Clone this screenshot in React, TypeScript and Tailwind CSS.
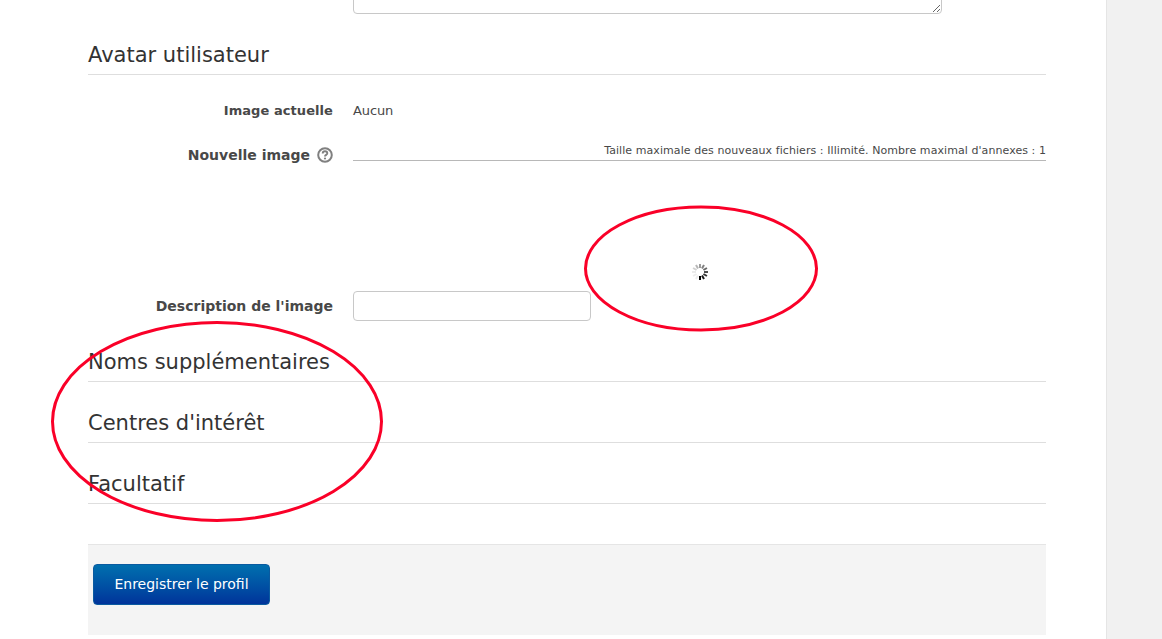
export default function App() {
  const font = { fontFamily: '"DejaVu Sans", sans-serif' };
  const Heading = ({ children, cls }: { children: string; cls: string }) => (
    <h3 className={`border-b border-[#dedede] text-[21px] leading-[24px] text-[#333333] pt-[1px] pb-[7px] ${cls}`}>{children}</h3>
  );
  return (
    <div style={font} className="relative flex h-[639px] w-[1162px] overflow-hidden bg-white">
      <div className="h-full w-[1107px] shrink-0 border-r border-[#e5e5e5] pl-[88px] pr-[60px]">
        <div className="flex">
          <div className="w-[265px] shrink-0" />
          <textarea className="mt-[-60px] block h-[74px] w-[589px] rounded-[4px] border border-[#c8c8c8] bg-white" />
        </div>
        <Heading cls="mt-[28px]">Avatar utilisateur</Heading>
        <div className="mt-[26px] flex items-center text-[13px] leading-[20px] text-[#484848]">
          <div className="w-[245px] text-right font-bold tracking-[0.07px]">Image actuelle</div>
          <div className="ml-[20px] tracking-[-0.1px]">Aucun</div>
        </div>
        <div className="mt-[24px] flex text-[#484848]">
          <div className="flex w-[245px] items-center justify-end gap-[7px] text-[14px] font-bold leading-[20px]">
            Nouvelle image
            <svg width="16" height="16" viewBox="0 0 16 16">
              <circle cx="8" cy="8" r="6.8" fill="none" stroke="#808080" strokeWidth="2" />
              <path d="M5.7 6.4c0-1.4 1.1-2.2 2.3-2.2s2.3.8 2.3 2c0 1.7-2.3 1.6-2.3 3.2" fill="none" stroke="#808080" strokeWidth="1.9" />
              <circle cx="8" cy="11.5" r="1.1" fill="#808080" />
            </svg>
          </div>
          <div className="ml-[20px] mt-[-4px] h-[20px] w-[693px] border-b border-[#b8b8b8] text-right text-[11px] leading-[20px] tracking-[0.07px] text-[#484848]">
            Taille maximale des nouveaux fichiers : Illimité. Nombre maximal d'annexes : 1
          </div>
        </div>
        <div className="mt-[126px] flex items-center text-[14px] text-[#484848]">
          <div className="w-[245px] text-right font-bold leading-[20px]">Description de l'image</div>
          <input className="ml-[20px] h-[30px] w-[238px] rounded-[4px] border border-[#c8c8c8] bg-white" />
        </div>
        <Heading cls="mt-[28px]">Noms supplémentaires</Heading>
        <Heading cls="mt-[28px]">Centres d'intérêt</Heading>
        <Heading cls="mt-[28px]">Facultatif</Heading>
        <div className="mt-[40px] h-[91px] border-t border-[#e5e5e5] bg-[#f4f4f4] pl-[5px] pt-[19px]">
          <button className="h-[41px] w-[177px] rounded-[4px] border border-[#0a5aa0] bg-gradient-to-b from-[#006fae] to-[#00339a] text-[14px] text-white">
            Enregistrer le profil
          </button>
        </div>
      </div>
      <div className="grow bg-[#f1f1f1]" />
      <svg width="18" height="18" viewBox="0 0 18 18" className="absolute left-[691px] top-[263px]">
        {Array.from({ length: 12 }).map((_, i) => {
          const a = (i * 30 * Math.PI) / 180;
          const g = Math.min(236, Math.round(((15 - i) % 12) * 26));
          return (
            <line key={i} x1={9 + Math.cos(a) * 4} y1={9 + Math.sin(a) * 4} x2={9 + Math.cos(a) * 8} y2={9 + Math.sin(a) * 8}
              stroke={`rgb(${g},${g},${g})`} strokeWidth="2" />
          );
        })}
      </svg>
      <svg width="1162" height="639" className="pointer-events-none absolute left-0 top-0">
        <ellipse cx="701" cy="268.5" rx="115.5" ry="61.5" fill="none" stroke="#fa0028" strokeWidth="3" />
        <ellipse cx="217" cy="421.5" rx="164.5" ry="99" fill="none" stroke="#fa0028" strokeWidth="3" />
      </svg>
    </div>
  );
}
